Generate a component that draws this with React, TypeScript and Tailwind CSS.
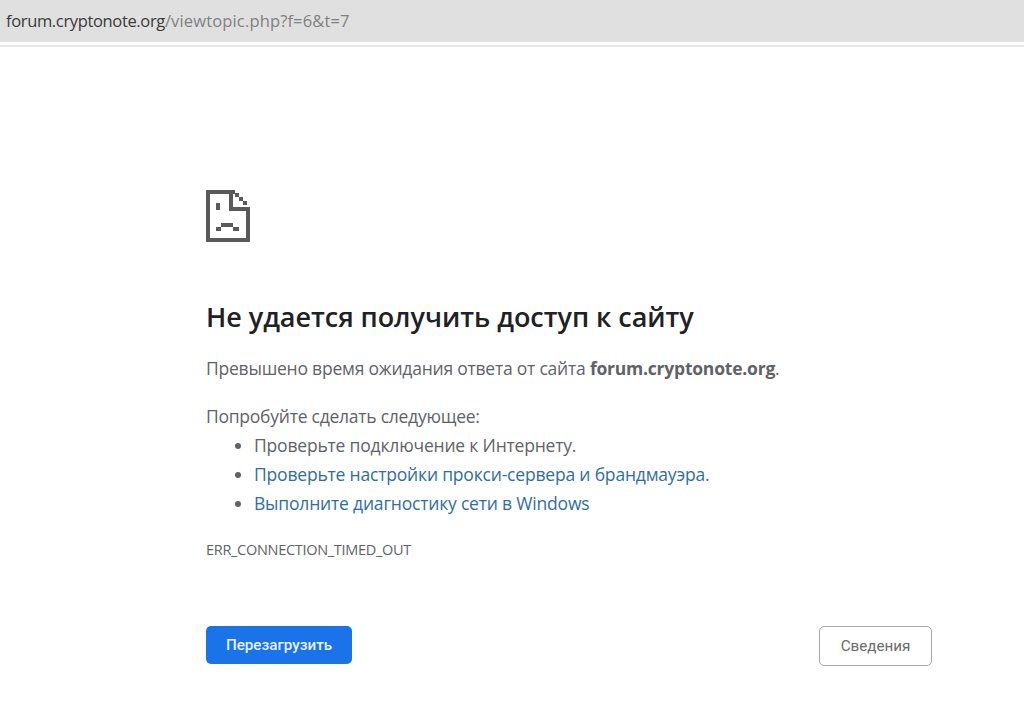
export default function App() {
  return (
    <div className="min-h-[719px] bg-white font-['Open_Sans','Noto_Sans','Liberation_Sans',sans-serif] text-[#5f6368]">
      <div className="h-[42px] bg-[#e0e0e0] flex items-center pl-[6px] text-[16.5px] tracking-[-0.35px] text-[#808080]">
        <span className="text-[#3a3a3a]">forum.cryptonote.org</span>
        <span className="tracking-[0.15px]">/viewtopic.php?f=6&amp;t=7</span>
      </div>
      <div className="h-[3px] bg-white" />
      <div className="h-[2px] bg-[#e6e6e6]" />
      <div className="pl-[206px] pr-[92px] pt-[143px]">
        <svg width="44" height="52" viewBox="0 0 44 52" className="block" fill="#5a5a5a">
          <rect x="0" y="0" width="29" height="4" />
          <rect x="0" y="0" width="4" height="52" />
          <rect x="0" y="48" width="44" height="4" />
          <rect x="40" y="17" width="4" height="35" />
          <rect x="23" y="0" width="4" height="21" />
          <rect x="23" y="17" width="21" height="4" />
          <rect x="29" y="3" width="4" height="4" />
          <rect x="33" y="7" width="4" height="4" />
          <rect x="37" y="11" width="4" height="4" />
          <rect x="10" y="13" width="4" height="7" />
          <rect x="15" y="33" width="12" height="4" />
          <rect x="10" y="37" width="5" height="4" />
          <rect x="27" y="37" width="6" height="4" />
        </svg>
        <h1 className="mt-[57px] text-[27px] leading-[36px] font-semibold tracking-[-0.04px] text-[#202124]">
          Не удается получить доступ к сайту
        </h1>
        <p className="mt-[19px] text-[17.5px] leading-[28px] tracking-[-0.22px]">
          Превышено время ожидания ответа от сайта <b className="font-bold">forum.cryptonote.org</b>.
        </p>
        <p className="mt-[20px] text-[17.5px] leading-[28px] tracking-[-0.25px]">Попробуйте сделать следующее:</p>
        <ul className="mt-px list-disc pl-[48px] text-[17.5px] leading-[29px] tracking-[-0.19px] marker:text-[#5f6368]">
          <li>Проверьте подключение к Интернету.</li>
          <li className="text-[#2f6ea5]">Проверьте настройки прокси-сервера и брандмауэра.</li>
          <li className="text-[#2f6ea5]">Выполните диагностику сети в Windows</li>
        </ul>
        <div className="mt-[22px] text-[14.5px] leading-[20px] tracking-[-0.3px]">ERR_CONNECTION_TIMED_OUT</div>
        <div className="mt-[66px] flex items-start justify-between">
          <button className="w-[146px] h-[38px] rounded-[5px] bg-[#1a73e8] text-[#e8f0fe] text-[15.2px] font-['Roboto',sans-serif] font-medium">
            Перезагрузить
          </button>
          <button className="w-[113px] h-[40px] rounded-[5px] border border-[#a8a8a8] bg-white text-[#6b6b6b] text-[15.2px] font-['Roboto',sans-serif] font-normal">
            Сведения
          </button>
        </div>
      </div>
    </div>
  );
}
